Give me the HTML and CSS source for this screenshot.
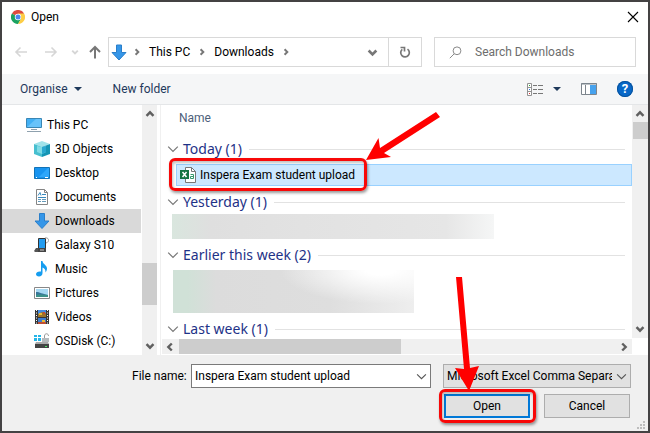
FILE: index.html
```html
<!DOCTYPE html>
<html lang="en-GB">
<head>
    <meta charset="UTF-8">
    <meta name="viewport" content="width=device-width, initial-scale=1.0">
    <title>Open</title>
    <link rel="stylesheet" href="styles.css">
</head>
<body>

<!-- shared shapes -->
<svg class="defs" width="0" height="0" aria-hidden="true">
    <symbol id="chevron" viewBox="0 0 10 10"><path d="M1 3l4 4 4-4" fill="none" stroke="currentColor"/></symbol>
    <symbol id="bold-chevron" viewBox="0 0 10 10"><path d="M1.500 3.200L5 6.700l3.500-3.500" fill="none" stroke="currentColor" stroke-width="2.400"/></symbol>
    <symbol id="download" viewBox="0 0 16 16"><path d="M5.500.5h5v7.500h4.500l-7 7.500-7-7.500h4.500z" fill="#3596e8" stroke="#2a7fca"/></symbol>
</svg>

<div class="dialog">

    <div class="titlebar">
        <svg width="14" height="14" viewBox="0 0 14 14">
            <path d="M7 7L.9 3.500A7 7 0 0 1 13.100 3.500z" fill="#dd4b3e"/>
            <path d="M7 7L.9 3.500A7 7 0 0 0 7 14l3.100-5.300z" fill="#1ba261"/>
            <path d="M7 3.500h6.100A7 7 0 0 1 7 14l3-5.200z" fill="#fdcd45"/>
            <circle cx="7" cy="7" r="3.200" fill="#fff"/>
            <circle cx="7" cy="7" r="2.500" fill="#4b87ee"/>
        </svg>
        <h1>Open</h1>
        <button class="close" aria-label="Close">
            <svg width="12" height="12" viewBox="0 0 12 12"><path d="M1 1l10 10M11 1L1 11" stroke="#000" stroke-width="1.100"/></svg>
        </button>
    </div>

    <div class="nav">
        <div class="history">
            <button class="off" aria-label="Back"><svg width="14" height="12" viewBox="0 0 14 12"><path d="M13 6H2M6.500 1.500L2 6l4.500 4.500" fill="none" stroke="currentColor" stroke-width="1.600"/></svg></button>
            <button class="off" aria-label="Forward"><svg width="14" height="12" viewBox="0 0 14 12"><path d="M1 6h11M7.500 1.500L12 6l-4.500 4.500" fill="none" stroke="currentColor" stroke-width="1.600"/></svg></button>
            <button class="off small" aria-label="Recent locations"><svg width="8" height="8"><use href="#bold-chevron"/></svg></button>
            <button aria-label="Up"><svg width="14" height="14" viewBox="0 0 14 14"><path d="M7 13.500V2M2 7l5-5 5 5" fill="none" stroke="currentColor" stroke-width="2"/></svg></button>
        </div>
        <div class="address">
            <svg width="16" height="17"><use href="#download"/></svg>
            <svg class="sep" width="8" height="8"><use href="#bold-chevron"/></svg>
            <a href="#">This PC</a>
            <svg class="sep" width="8" height="8"><use href="#bold-chevron"/></svg>
            <a href="#">Downloads</a>
            <svg class="sep" width="8" height="8"><use href="#bold-chevron"/></svg>
            <button class="previous" aria-label="Previous locations"><svg width="11" height="11"><use href="#bold-chevron"/></svg></button>
            <button class="refresh" aria-label="Refresh">
                <svg width="12" height="13" viewBox="0 0 12 13"><path d="M8.500 3.100A4.300 4.300 0 1 1 3.300 3.300M1.500 1.500h4v4" fill="none" stroke="#777" stroke-width="1.700"/></svg>
            </button>
        </div>
        <div class="search">
            <svg width="13" height="13" viewBox="0 0 13 13"><path d="M.8 12.200L5.200 7.800" stroke="#8a8a8a"/><circle cx="8" cy="4.800" r="3.900" fill="none" stroke="#8a8a8a"/></svg>
            <input type="text" placeholder="Search Downloads" aria-label="Search Downloads">
        </div>
    </div>

    <div class="toolbar">
        <button class="organise">Organise <span class="arrow"></span></button>
        <button>New folder</button>
        <div class="tools">
            <button class="view" aria-label="Change your view">
                <svg width="16" height="13" viewBox="0 0 16 13">
                    <path d="M.5.5h4v12h-4zM.5 4.500h4M.5 8.500h4" fill="#fff" stroke="#929292"/>
                    <path d="M6 2.500h4m1 0h5M6 6.500h4m1 0h5M6 10.500h4m1 0h5" stroke="#777"/>
                    <path d="M2 2.500h1" stroke="#3a3"/><path d="M2 6.500h1" stroke="#2777e0"/><path d="M2 10.500h1" stroke="#d33"/>
                </svg>
                <span class="arrow"></span>
            </button>
            <button aria-label="Preview pane">
                <svg width="16" height="12" viewBox="0 0 16 12">
                    <path d="M.5.5h15v11H.5z" fill="#fff" stroke="#7d858d"/><path d="M0 1h16M4.500 2v9" stroke="#7d858d"/>
                    <path d="M9 2h6v9H9z" fill="#46a2ee"/>
                </svg>
            </button>
            <button class="help" aria-label="Help">?</button>
        </div>
    </div>

    <div class="content">
        <ul class="tree">
            <li class="root">
                <svg width="16" height="16" viewBox="0 0 16 16"><path d="M.5 1.500h15v9H.5z" fill="#42b0f5" stroke="#3a86b4"/><path d="M1 10l9-8h5v8z" fill="#68c3fa"/><path d="M5 12.500h6M1 14.500h14" stroke="#8fa1ae"/></svg>
                <a href="#">This PC</a>
            </li>
            <li>
                <svg width="16" height="16" viewBox="0 0 16 16"><path d="M8 0l8 3-8 3-8-3z" fill="#a0e3ea"/><path d="M0 3l8 3v10l-8-3z" fill="#47bfcf"/><path d="M16 3L8 6v10l8-3z" fill="#1595b4"/><path d="M3 5l5 1 4-1v6l-4 2-5-2z" fill="#7fdbe5"/><path d="M8 6l4-1v6l-4 2z" fill="#2aa8d0"/></svg>
                <a href="#">3D Objects</a>
            </li>
            <li>
                <svg width="16" height="16" viewBox="0 0 16 16"><path d="M.5 2.500h15v11H.5z" fill="#1894f0" stroke="#1273b7"/><path d="M5 12L14 3h1v9z" fill="#2fa7fb"/><path d="M2 12.500h1m8 0h3" stroke="#fff"/></svg>
                <a href="#">Desktop</a>
            </li>
            <li>
                <svg width="16" height="16" viewBox="0 0 16 16"><path d="M2.500.5h8l3 3v12h-11z" fill="#fff" stroke="#858585"/><path d="M10.500.5v3h3" fill="none" stroke="#858585"/><path d="M4 6.500l2-3 1 3M8 5.500h4M4 8.500h8" fill="none" stroke="#3889bd"/><path d="M4 10.500h3m1 0h4M4 12.500h3m1 0h4" stroke="#659aba"/></svg>
                <a href="#">Documents</a>
            </li>
            <li class="active">
                <svg width="16" height="16"><use href="#download"/></svg>
                <a href="#">Downloads</a>
            </li>
            <li>
                <svg width="16" height="16" viewBox="0 0 16 16"><path d="M4.500 1.500h7v12h-7z" fill="#239cf0" stroke="#333"/><path d="M4 11h8v4H4z" fill="#444"/><path d="M11 1c4-1 5 4 1 5" fill="none" stroke="#999"/><path d="M0 14l2-3h2v4H1z" fill="#555"/><path d="M6 13h4" stroke="#ccc"/></svg>
                <a href="#">Galaxy S10</a>
            </li>
            <li>
                <svg width="16" height="16" viewBox="0 0 16 16"><path d="M7 0h1.500c0 3 4.500 4 4.500 7.500 0 2-1 3-1.500 4 .2-3-1-4-3-5V12c0 2-1.500 3.500-3.500 3.500S2 14.500 2 13s2-3 5-2.500z" fill="#159df0"/></svg>
                <a href="#">Music</a>
            </li>
            <li>
                <svg width="16" height="16" viewBox="0 0 16 16"><path d="M.5 2.500h15v11H.5z" fill="#fff" stroke="#888"/><path d="M2 4h12v8H2z" fill="#a6d8f2"/><path d="M2 7c4 0 6 2 12 3v2H2z" fill="#39769a"/><path d="M2 10c4-1 8 0 12 0v2H2z" fill="#3b9189"/></svg>
                <a href="#">Pictures</a>
            </li>
            <li>
                <svg width="16" height="16" viewBox="0 0 16 16"><path d="M1 1h14v14H1z" fill="#353535"/><path d="M4 1h8v7H4z" fill="#458be0"/><path d="M4 9h8v6H4z" fill="#3d7dd0"/><path d="M4 5l4-2 4 1v4H4z" fill="#9a742c"/><path d="M5 5h3M8 12h3" stroke="#e9b932" stroke-width="2"/><path d="M4 14h8M9 4h2" stroke="#bd4e35" stroke-width="2"/><path d="M2.500 1v14M13.500 1v14" stroke="#fff" stroke-dasharray="1 1.500"/></svg>
                <a href="#">Videos</a>
            </li>
            <li>
                <svg width="16" height="16" viewBox="0 0 16 16"><path d="M0 2h3v2H0zM4 2h3v2H4zM0 5h3v3H0zM4 5h3v3H4z" fill="#25b5e8"/><path d="M2 9h12l1 2H1z" fill="#aaa"/><path d="M1 11h14v4H1z" fill="#444"/><path d="M11 13.500h2" stroke="#4fe568"/><path d="M10.500 5V3c0-3 4-3 4 0" fill="none" stroke="#999"/><path d="M8 5h7v4H8z" fill="#b5babd"/></svg>
                <a href="#">OSDisk (C:)</a>
            </li>
        </ul>
        <div class="vscroll tree-scroll">
            <svg class="up" width="10" height="10"><use href="#bold-chevron"/></svg>
            <span class="thumb"></span>
            <svg width="10" height="10"><use href="#bold-chevron"/></svg>
        </div>

        <div class="files">
            <div class="list">
                <div class="column">Name</div>

                <h2><svg width="12" height="12"><use href="#chevron"/></svg>Today (1)</h2>
                <div class="file">
                    <svg width="16" height="16" viewBox="0 0 16 16"><path d="M5.500.5h6l4 4v11h-10z" fill="#fff" stroke="#777"/><path d="M11.500.5v4h4" fill="none" stroke="#777"/><path d="M0 3h9v9H0z" fill="#157443"/><path d="M2.500 5l4 5m0-5l-4 5" stroke="#fff" stroke-width="1.500"/><path d="M10.500 7.500h3v4h-3v-2h3" fill="none" stroke="#35986a"/></svg>
                    <span>Inspera Exam student upload</span>
                    <div class="mark mark-file">
                        <svg width="76" height="52" viewBox="0 0 76 52"><path d="M0 50L12.500 28 14 38 70 2l4 5L18 43l7 4z" fill="#f00"/></svg>
                    </div>
                </div>

                <h2><svg width="12" height="12"><use href="#chevron"/></svg>Yesterday (1)</h2>
                <div class="hidden-files one"></div>

                <h2><svg width="12" height="12"><use href="#chevron"/></svg>Earlier this week (2)</h2>
                <div class="hidden-files two"></div>

                <h2><svg width="12" height="12"><use href="#chevron"/></svg>Last week (1)</h2>
            </div>
            <div class="hscroll">
                <svg class="left" width="10" height="10"><use href="#bold-chevron"/></svg>
                <span class="thumb"></span>
                <svg class="right" width="10" height="10"><use href="#bold-chevron"/></svg>
            </div>
        </div>
        <div class="vscroll list-scroll">
            <svg class="up" width="10" height="10"><use href="#bold-chevron"/></svg>
            <span class="thumb"></span>
            <svg width="10" height="10"><use href="#bold-chevron"/></svg>
        </div>
    </div>

    <div class="footer">
        <div class="fields">
            <label for="filename">File name:</label>
            <div class="combo name">
                <input type="text" id="filename" value="Inspera Exam student upload">
                <svg width="11" height="11"><use href="#chevron"/></svg>
            </div>
            <div class="combo type">
                <select aria-label="File type">
                    <option>Microsoft Excel Comma Separated Values File</option>
                </select>
                <svg width="11" height="11"><use href="#chevron"/></svg>
            </div>
        </div>
        <div class="actions">
            <div class="open-wrap">
                <button class="open">Open</button>
                <div class="mark mark-open">
                    <svg width="30" height="114" viewBox="0 0 30 114"><path d="M3 0h6l8 91 9-2-10 25L2 91l9 1z" fill="#f00"/></svg>
                </div>
            </div>
            <button>Cancel</button>
        </div>
        <svg class="grip" width="9" height="9" viewBox="0 0 9 9"><path d="M6 0h2v2H6zM3 3h2v2H3zM6 3h2v2H6zM0 6h2v2H0zM3 6h2v2H3zM6 6h2v2H6z" fill="#bdbdbd"/></svg>
    </div>

</div>

</body>
</html>
```
FILE: styles.css
```css
* {
    box-sizing: border-box;
}

body {
    margin: 0;
    font-family: Roboto, "Open Sans", sans-serif;
    font-size: 12px;
    line-height: 16px;
    color: #000;
}

svg {
    display: block;
    flex: none;
}

.defs {
    position: absolute;
}

button,
input,
select {
    font: inherit;
    color: inherit;
    margin: 0;
    padding: 0;
    border: none;
    background: none;
    border-radius: 0;
    outline: none;
}

a {
    color: inherit;
    text-decoration: none;
}

.dialog {
    display: flex;
    flex-direction: column;
    min-height: 100vh;
    border: 2px solid #444243;
    background: #fff;
}

/* title */
.titlebar {
    display: flex;
    align-items: center;
    gap: 6px;
    height: 29px;
    padding: 0 9px;
}

.titlebar h1 {
    margin: 0;
    font-size: 12px;
    font-weight: normal;
}

.close {
    margin-left: auto;
}

/* address row */
.nav {
    display: flex;
    height: 43px;
    padding: 6px 12px 7px 0;
}

.history {
    display: flex;
    align-items: center;
    width: 106px;
    padding-left: 12px;
    gap: 16px;
    color: #777;
}

.history .off {
    color: #d6d6d6;
}

.history .small {
    margin: 0 -7px 0 -3px;
}

.address {
    display: flex;
    align-items: center;
    flex: 1;
    border: 1px solid #d9d9d9;
    padding-left: 2px;
}

.sep {
    margin: 0 8px 0 6px;
    color: #777;
    transform: rotate(-90deg);
}

.address a + .sep {
    margin-left: 8px;
}

.previous {
    margin-left: auto;
    padding: 0 10px;
    color: #777;
}

.refresh {
    display: flex;
    align-items: center;
    justify-content: center;
    align-self: stretch;
    width: 33px;
    border-left: 1px solid #d9d9d9;
}

.search {
    display: flex;
    align-items: center;
    width: 202px;
    margin-left: 12px;
    padding-left: 14px;
    gap: 13px;
    border: 1px solid #d9d9d9;
}

.search input {
    flex: 1;
    min-width: 0;
}

.search input::placeholder {
    color: #6d6d6d;
    opacity: 1;
}

/* toolbar */
.toolbar {
    display: flex;
    align-items: center;
    height: 31px;
    padding: 0 15px 0 18px;
    gap: 31px;
    background: #f5f6f7;
    border-bottom: 1px solid #e4e6e8;
    color: #1e395b;
}

.organise,
.view {
    display: flex;
    align-items: center;
    gap: 6px;
}

.arrow {
    border: 4px solid transparent;
    border-top-color: #1e395b;
    border-bottom: none;
}

.tools {
    display: flex;
    align-items: center;
    margin-left: auto;
    gap: 20px;
}

.view {
    gap: 10px;
}

.help {
    width: 16px;
    height: 16px;
    border-radius: 50%;
    background: #0868c8;
    box-shadow: inset 0 0 0 1px #07529c;
    color: #fff;
    font-size: 13px;
    font-weight: bold;
    line-height: 16px;
}

/* tree and list */
.content {
    display: flex;
    flex: 1;
}

.tree {
    width: 139px;
    margin: 0;
    padding: 8px 0 0;
    list-style: none;
}

.tree li {
    display: flex;
    align-items: center;
    gap: 5px;
    height: 24px;
    padding-left: 32px;
}

.tree .root {
    padding-left: 24px;
}

.tree .active {
    background: #d9d9d9;
}

.vscroll {
    display: flex;
    flex-direction: column;
    align-items: center;
    width: 15px;
    padding: 4px 0;
    background: #f0f0f0;
    color: #606060;
}

.vscroll svg:last-child {
    margin-top: auto;
}

.up {
    transform: rotate(180deg);
}

.left {
    transform: rotate(90deg);
}

.right {
    transform: rotate(-90deg);
}

.thumb {
    background: #cdcdcd;
}

.tree-scroll {
    margin-left: 1px;
}

.tree-scroll .thumb {
    width: 15px;
    height: 42px;
    margin-top: 144px;
}

.list-scroll {
    width: 16px;
    margin-bottom: 17px;
}

.list-scroll .thumb {
    width: 15px;
    height: 17px;
    margin-top: 3px;
}

.files {
    display: flex;
    flex-direction: column;
    flex: 1;
    min-width: 0;
    margin-left: 3px;
    border-left: 1px solid #f0f0f0;
}

.list {
    height: 234px;
    padding-left: 6px;
    clip-path: inset(0 -20px 0 0);
}

.column {
    height: 28px;
    padding: 5px 0 0 12px;
    color: #4c607a;
}

.list h2 {
    display: flex;
    align-items: center;
    height: 24px;
    margin: 4px 7px 0 0;
    gap: 4px;
    color: #1e3287;
    font-family: "Noto Sans", sans-serif;
    font-size: 14px;
    font-weight: normal;
}

.list h2 svg {
    color: #777;
}

.list h2::after {
    content: "";
    flex: 1;
    height: 1px;
    margin-left: 3px;
    background: #e2e2e2;
}

.file {
    position: relative;
    display: flex;
    align-items: center;
    height: 22px;
    margin: 3px 0 0 9px;
    padding-left: 3px;
    gap: 4px;
    border: 1px solid #99d1ff;
    background: #cce8ff;
}

.hidden-files {
    height: 25px;
    margin-left: 5px;
    width: 322px;
    background: linear-gradient(90deg, #d9e6de, #dfdfdf 12%, #e2e2e2 40%, #e6e6e6 85%, #f5f6f6);
}

.two {
    width: 241px;
    height: 43px;
    margin: 3px 0 0 6px;
    background:
        radial-gradient(ellipse 100px 34px at 86% 0, #fff 15%, rgba(255, 255, 255, 0) 100%),
        linear-gradient(90deg, #d0e1d7 6%, #dcdcdc 18%, #dedede 65%, #eee);
}

.hscroll {
    display: flex;
    align-items: center;
    height: 15px;
    margin-left: 1px;
    padding: 0 3px;
    background: #f0f0f0;
    color: #606060;
}

.hscroll .thumb {
    width: 222px;
    height: 15px;
    margin: 0 auto 0 4px;
}

/* red highlights */
.mark {
    position: absolute;
    border: 3px solid #f80808;
    border-radius: 6px;
    box-shadow: 1px 2px 3px rgba(0, 0, 0, 0.4), inset 1px 2px 3px rgba(0, 0, 0, 0.25);
    pointer-events: none;
}

.mark svg {
    position: absolute;
}

.mark-file {
    top: -7px;
    left: -8px;
    width: 198px;
    height: 33px;
}

.mark-file svg {
    left: 194px;
    bottom: 26px;
}

.mark-open {
    top: -5px;
    left: -5px;
    width: 97px;
    height: 34px;
}

.mark-open svg {
    left: 11px;
    bottom: 29px;
}

/* bottom */
.footer {
    position: relative;
    padding: 9px 17px 13px 130px;
    background: #f0f0f0;
}

.fields {
    display: flex;
    height: 24px;
}

.fields label {
    width: 59px;
    padding-right: 5px;
    line-height: 24px;
    text-align: right;
    white-space: nowrap;
}

.combo {
    position: relative;
    height: 24px;
    border: 1px solid #7a7a7a;
    background: #fff;
}

.combo svg {
    position: absolute;
    top: 6px;
    right: 3px;
    color: #555;
}

.name {
    flex: 1;
}

.name input {
    width: 100%;
    height: 22px;
    padding: 0 20px 0 3px;
}

.type {
    width: 188px;
    margin-left: 12px;
    border-color: #adadad;
    background: #e1e1e1;
}

.type select {
    width: 100%;
    height: 22px;
    padding: 0 18px 0 3px;
    appearance: none;
}

.actions {
    display: flex;
    justify-content: flex-end;
    gap: 14px;
    margin: 6px 1px 0 0;
}

.open-wrap {
    position: relative;
}

.actions button {
    width: 86px;
    height: 24px;
    border: 1px solid #adadad;
    background: #e1e1e1;
}

.actions .open {
    display: block;
    border: 2px solid #0078d7;
}

.grip {
    position: absolute;
    right: 2px;
    bottom: 1px;
}
```
